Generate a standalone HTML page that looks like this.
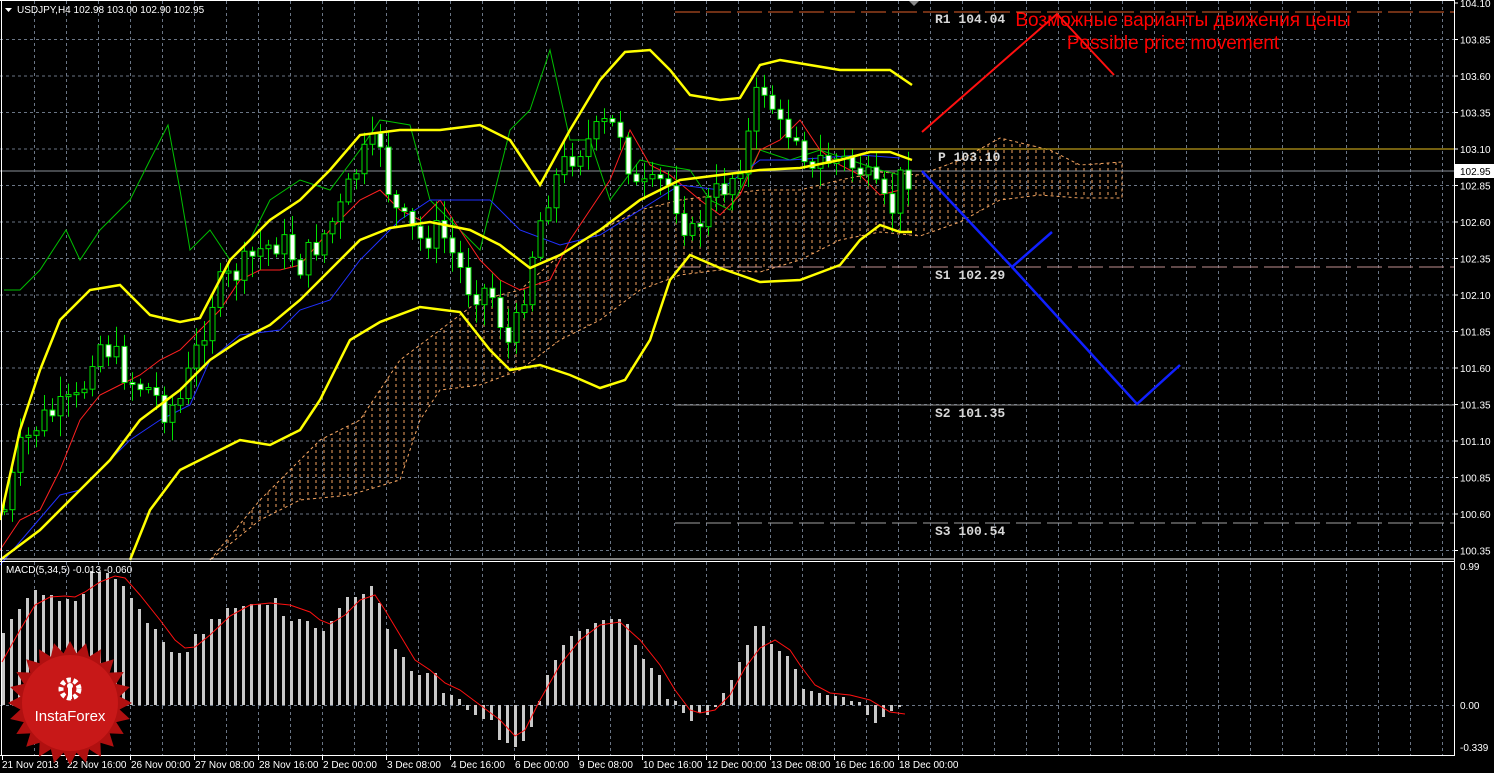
<!DOCTYPE html>
<html><head><meta charset="utf-8">
<style>
html,body{margin:0;padding:0;background:#000;width:1494px;height:773px;overflow:hidden}
svg{display:block}
text{font-family:"Liberation Sans","DejaVu Sans",sans-serif}
text.mono{font-family:"Liberation Mono","DejaVu Sans Mono",monospace;font-weight:bold}
</style></head>
<body>
<svg id="s" width="1494" height="773" xmlns="http://www.w3.org/2000/svg">
<defs>
<pattern id="hatch" width="8" height="6" patternUnits="userSpaceOnUse">
<line x1="4" y1="0" x2="4" y2="3" stroke="#f4a460" stroke-width="1"/>
</pattern>
</defs>
<rect width="1494" height="773" fill="#000"/>
<g id="grid"></g>
<polygon fill="url(#hatch)" stroke="#f4a460" stroke-width="1" stroke-dasharray="3,3" points="210,560 260,500 320,440 360,420 400,360 440,330 480,300 520,290 560,255 600,230 640,210 680,200 720,195 760,190 800,190 840,180 880,172 920,175 960,160 1000,138 1050,150 1080,165 1122,162 1122,198 1080,198 1040,195 1000,200 960,222 920,236 880,232 840,240 800,260 760,272 720,270 680,275 640,290 600,320 560,340 520,370 480,385 440,390 420,420 400,480 350,495 300,500 260,520 210,560"/>
<line x1="675" y1="12" x2="1454" y2="12" stroke="#e0602a" stroke-dasharray="25,6"/>
<line x1="675" y1="149" x2="1454" y2="149" stroke="#e8c020"/>
<line x1="0" y1="171" x2="1454" y2="171" stroke="#8a9099"/>
<line x1="675" y1="267" x2="1454" y2="267" stroke="#c09090" stroke-dasharray="25,6"/>
<line x1="675" y1="405" x2="1454" y2="405" stroke="#909090"/>
<line x1="675" y1="523" x2="1454" y2="523" stroke="#a0a0a0" stroke-dasharray="25,6"/>
<g id="ind"></g>
<g id="candles"></g>
<polyline fill="none" stroke="#ffff00" stroke-width="2.5" points="0,520 20,430 40,370 60,320 90,290 120,285 150,315 180,322 200,318 230,260 270,220 300,200 330,170 360,135 400,130 440,130 480,125 510,140 540,185 570,130 600,80 625,52 650,50 670,70 690,95 720,100 740,98 760,65 780,60 810,65 840,70 870,70 890,70 912,85"/>
<polyline fill="none" stroke="#ffff00" stroke-width="2.5" points="0,560 40,530 80,490 110,460 140,420 180,390 210,360 240,340 270,325 300,300 330,270 360,240 390,228 430,222 470,230 500,245 530,268 560,255 600,230 640,200 680,180 720,175 760,170 800,168 840,160 870,152 890,152 912,160"/>
<polyline fill="none" stroke="#ffff00" stroke-width="2.5" points="130,560 150,510 180,470 210,455 240,440 270,445 300,430 320,400 350,340 380,322 420,307 460,312 490,350 510,370 540,365 570,375 600,388 625,380 650,340 670,280 690,255 720,268 760,282 800,280 840,265 860,240 880,225 900,232 912,232"/>
<polyline fill="none" stroke="#ff1010" stroke-width="2" points="922,132 1057,14 1114,75"/>
<polyline fill="none" stroke="#1020ff" stroke-width="2.5" points="922,171 1012,267 1052,232"/>
<polyline fill="none" stroke="#1020ff" stroke-width="2.5" points="1012,267 1137,404 1180,365"/>
<g font-size="13" fill="#d8d8d8">
<text class="mono" x="935" y="23">R1 104.04</text>
<text class="mono" x="938" y="161">P 103.10</text>
<text class="mono" x="935" y="279">S1 102.29</text>
<text class="mono" x="935" y="417">S2 101.35</text>
<text class="mono" x="935" y="535">S3 100.54</text>
</g>
<text x="1183" y="26" font-size="19" fill="#ff0000" text-anchor="middle">Возможные варианты движения цены</text>
<text x="1173" y="49" font-size="19" fill="#ff0000" text-anchor="middle">Possible price movement</text>
<polygon points="5,8 12,8 8.5,12" fill="#fff"/>
<text x="17" y="13" font-size="10" fill="#fff">USDJPY,H4  102.98 103.00 102.90 102.95</text>
<polygon points="908,0 920,0 914,6" fill="#888"/>
<line x1="0" y1="559" x2="1454" y2="559" stroke="#fff"/>
<line x1="0" y1="561.5" x2="1454" y2="561.5" stroke="#fff"/>
<line x1="1454.5" y1="0" x2="1454.5" y2="756" stroke="#fff"/>
<line x1="0" y1="755.5" x2="1454" y2="755.5" stroke="#fff"/>
<line x1="1.5" y1="0" x2="1.5" y2="756" stroke="#fff"/>
<line x1="0" y1="0.5" x2="1454" y2="0.5" stroke="#fff"/>
<g id="macd"></g>
<text x="6" y="573" font-size="10" fill="#fff">MACD(5,34,5) -0.013 -0.060</text>
<g id="axis" font-size="10" fill="#fff"></g>
<g transform="translate(70,703)">
<polygon id="star" fill="#b01010"/>
<circle r="48" fill="#c81818"/>
<g fill="#fff" transform="translate(0,-14)">
<circle r="9" fill="none" stroke="#fff" stroke-width="5" stroke-dasharray="4,2.5"/>
<rect x="-2" y="-3" width="4" height="13"/>
<circle r="3" cy="-3"/>
</g>
<text x="0" y="18" font-size="15" fill="#fff" text-anchor="middle">InstaForex</text>
</g>
</svg>
<script>
(function(){
var NS="http://www.w3.org/2000/svg";
function el(p,t,a){var e=document.createElementNS(NS,t);for(var k in a)e.setAttribute(k,a[k]);p.appendChild(e);return e;}
var g=document.getElementById('grid');
for(var x=34;x<1454;x+=32){el(g,'line',{x1:x+.5,y1:1,x2:x+.5,y2:558,stroke:'#6a7585','stroke-dasharray':'3,3'});el(g,'line',{x1:x+.5,y1:562,x2:x+.5,y2:755,stroke:'#6a7585','stroke-dasharray':'3,3'});}
for(var y=39.5;y<558;y+=36.5){el(g,'line',{x1:0,y1:y,x2:1454,y2:y,stroke:'#6a7585','stroke-dasharray':'3,3'});}
el(g,'line',{x1:0,y1:705.5,x2:1454,y2:705.5,stroke:'#6a7585','stroke-dasharray':'3,3'});
var ax=document.getElementById('axis');
var prices=['104.10','103.85','103.60','103.35','103.10','102.85','102.60','102.35','102.10','101.85','101.60','101.35','101.10','100.85','100.60','100.35'];
for(var i=0;i<prices.length;i++){var yy=3+i*36.5;el(ax,'line',{x1:1454,y1:yy,x2:1458,y2:yy,stroke:'#fff'});var t=el(ax,'text',{x:1460,y:yy+4});t.textContent=prices[i];}
el(ax,'rect',{x:1455,y:164,width:39,height:14,fill:'#fff'});var tt=el(ax,'text',{x:1460,y:175,fill:'#000'});tt.textContent='102.95';
[['0.99',570],['0.00',709],['-0.339',751]].forEach(function(a){var t=el(ax,'text',{x:1460,y:a[1]});t.textContent=a[0];});
var dates=['21 Nov 2013','22 Nov 16:00','26 Nov 00:00','27 Nov 08:00','28 Nov 16:00','2 Dec 00:00','3 Dec 08:00','4 Dec 16:00','6 Dec 00:00','9 Dec 08:00','10 Dec 16:00','12 Dec 00:00','13 Dec 08:00','16 Dec 16:00','18 Dec 00:00'];
for(var i=0;i<dates.length;i++){var xx=2+64*i;el(ax,'line',{x1:xx+.5,y1:756,x2:xx+.5,y2:760,stroke:'#fff'});var t=el(ax,'text',{x:xx+(i==0?0:1),y:768});t.textContent=dates[i];}
var path=[[4,510],[20,450],[40,420],[60,410],[80,400],[95,340],[110,350],[130,380],[150,390],[165,410],[180,400],[200,340],[215,290],[240,270],[260,250],[280,240],[300,265],[320,240],[340,210],[360,160],[380,140],[390,200],[400,220],[420,240],[440,230],[455,260],[470,290],[490,290],[500,320],[510,350],[520,310],[530,260],[545,200],[560,170],[575,150],[590,140],[605,125],[620,130],[635,190],[650,190],[665,180],[680,210],[690,240],[700,220],[710,200],[730,180],[745,150],[760,80],[770,100],[780,130],[800,130],[810,180],[820,160],[840,160],[860,170],[880,200],[890,215],[900,180],[914,170]];
function interp(P,x){for(var i=0;i<P.length-1;i++){if(x>=P[i][0]&&x<=P[i+1][0]){var f=(x-P[i][0])/(P[i+1][0]-P[i][0]);return P[i][1]+f*(P[i+1][1]-P[i][1]);}}return P[P.length-1][1];}
var cg=document.getElementById('candles');var seed=7;function rnd(){seed=(seed*9301+49297)%233280;return seed/233280;}
var prev=interp(path,4);
for(var x=4;x<=914;x+=8){var c=interp(path,x)+(rnd()-.5)*30;var o=prev;var hi=Math.min(o,c)-rnd()*18-3,lo=Math.max(o,c)+rnd()*18+3;
el(cg,'line',{x1:x+.5,y1:hi,x2:x+.5,y2:lo,stroke:'#00e000'});
var bt=Math.min(o,c),h=Math.max(2,Math.abs(o-c));
el(cg,'rect',{x:x-2,y:bt,width:5,height:h,fill:(c>o?'#fff':'#000'),stroke:'#00e000'});prev=c;}
var ig=document.getElementById('ind');
el(ig,'polyline',{fill:'none',stroke:'#00c000','stroke-width':1,points:'4,290 20,290 40,270 66,230 80,260 100,230 130,200 150,160 168,125 180,190 190,250 210,230 230,260 250,240 270,200 300,180 330,190 360,150 380,120 410,125 430,200 460,230 480,250 510,130 530,110 550,50 570,140 590,140 610,200 640,160 660,165 690,170 710,200 730,210 760,150 790,160 820,150 850,160 880,170 900,175'});
el(ig,'polyline',{fill:'none',stroke:'#ff2020','stroke-width':1,points:'0,550 20,520 40,510 60,470 80,420 100,395 120,385 140,375 160,360 180,350 200,330 220,310 240,280 260,270 280,270 300,265 330,230 360,200 380,190 400,210 420,220 440,200 460,230 480,260 500,280 520,290 550,280 570,240 590,210 610,180 630,130 650,165 670,175 700,200 720,215 740,195 760,150 780,140 800,120 820,150 840,165 860,175 880,195 900,190'});
el(ig,'polyline',{fill:'none',stroke:'#2030ff','stroke-width':1,points:'0,565 30,530 60,495 80,490 100,470 130,440 160,420 190,405 210,360 240,335 280,330 300,310 330,300 360,260 380,240 400,220 430,200 460,200 490,200 520,230 560,245 600,235 640,210 680,185 720,190 740,175 760,160 790,160 820,158 860,155 900,158'});
var mg=document.getElementById('macd');
var tops=[633,619,609,598,590,595,595,601,599,601,594,571,572,573,579,586,598,609,623,629,642,652,653,652,634,634,619,619,608,608,606,604,604,605,598,616,621,619,621,628,631,621,608,597,597,594,586,603,629,649,657,671,675,673,673,693,695,699,710,715,719,720,740,743,747,741,727,701,675,660,645,636,631,629,623,620,619,619,624,645,659,668,675,699,701,713,721,713,715,707,693,680,662,645,626,626,644,651,656,669,689,691,693,695,696,697,701,702,715,723,717,711,707];
for(var i=0;i<tops.length;i++){var x=2+8*i;var t=tops[i];var y0=Math.min(t,705),h=Math.abs(705-t);if(h<1)h=1;el(mg,'rect',{x:x,y:y0,width:3,height:h,fill:'#c8c8c8'});}
el(mg,'polyline',{fill:'none',stroke:'#ff1010','stroke-width':1,points:'2,662 20,630 35,605 50,597 65,596 75,597 85,592 100,582 115,576 125,578 140,595 160,620 175,640 185,648 195,647 210,635 230,616 250,605 270,603 290,605 310,612 320,620 330,624 345,615 360,600 375,595 385,610 400,635 415,660 430,670 445,683 460,690 480,705 500,720 515,736 525,730 540,700 560,665 580,640 600,625 620,622 640,640 660,665 675,690 690,710 700,713 715,710 730,695 745,668 760,648 775,640 790,650 800,665 815,685 830,693 850,695 870,700 890,712 905,714'});
var pts=[];for(var i=0;i<48;i++){var r=(i%2==0)?62:50;var a=i*Math.PI/24;pts.push((r*Math.cos(a)).toFixed(1)+','+(r*Math.sin(a)).toFixed(1));}
document.getElementById('star').setAttribute('points',pts.join(' '));
})();
</script>
</body></html>
